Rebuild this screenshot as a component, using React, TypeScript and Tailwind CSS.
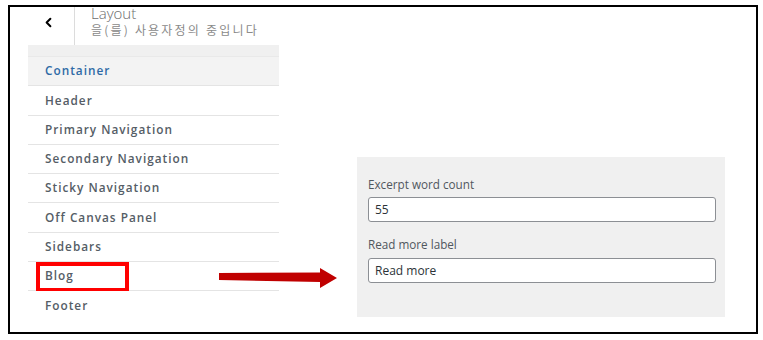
import { ChevronLeft } from 'lucide-react';

const sections = [
  'Container',
  'Header',
  'Primary Navigation',
  'Secondary Navigation',
  'Sticky Navigation',
  'Off Canvas Panel',
  'Sidebars',
  'Blog',
  'Footer',
];

const SidebarRow = ({ label }: { label: string }) => {
  const active = label === 'Container';
  const marked = label === 'Blog';
  const last = label === 'Footer';
  return (
    <div
      className={
        'relative flex h-[29.3px] items-center pl-[17px] text-[11.8px] font-semibold tracking-[1px] ' +
        (last ? '' : 'border-b border-[#e4e4e4] ') +
        (active ? 'bg-[#f3f3f3] text-[#2e6aa6]' : 'bg-white text-[#555d66]')
      }
    >
      {label}
      {marked && (
        <div className="absolute left-[8px] top-[0px] h-[30px] w-[93px] border-4 border-[#ff0000]" />
      )}
    </div>
  );
};

export default function App() {
  return (
    <div className="h-[340px] w-[763px] overflow-hidden bg-white pl-[8px] pt-[5px] font-['Open_Sans',sans-serif]">
      <div className="relative flex h-[329px] w-[750px] border-2 border-black bg-white">
        <aside className="ml-[18px] flex w-[251px] flex-col">
          <div className="flex h-[38px]">
            <div className="flex w-[47px] items-center border-r border-[#dcdcdc] pb-[8px] pl-[13px]">
              <ChevronLeft size={15} strokeWidth={3.2} className="text-black" />
            </div>
            <div className="-mt-[3px] flex flex-col pl-[16px]">
              <span className="text-[15px] font-light leading-[19px] text-[#6b6b6b]">Layout</span>
              <span className="font-['Noto_Sans_CJK_KR',sans-serif] text-[12px] leading-[14px] tracking-[2.2px] text-[#8a8a8a]">
                을(를) 사용자정의 중입니다
              </span>
            </div>
          </div>
          <div className="h-[12px] border-b border-[#e9e9e9] bg-[#f0f0f0]" />
          {sections.map((s) => (
            <SidebarRow key={s} label={s} />
          ))}
        </aside>

        <svg
          className="absolute left-[209px] top-[261px]"
          width="120"
          height="22"
          viewBox="0 0 120 22"
        >
          <polygon points="0,5 101,4.5 101,0 118,10 101,20 101,14 0,12" fill="#c00000" />
        </svg>

        <section className="ml-[78px] mt-[150px] flex h-[160px] w-[368px] flex-col bg-[#f0f0f0] pl-[11px] pr-[9px] pt-[19px]">
          <label className="text-[11.7px] leading-[16px] text-[#50575e]">Excerpt word count</label>
          <div className="mt-[5px] flex h-[25px] items-center rounded-[3px] border border-[#8c8f94] bg-white px-[6px] text-[12px] text-[#2c3338]">
            55
          </div>
          <label className="mt-[14px] text-[11.7px] leading-[16px] text-[#50575e]">Read more label</label>
          <div className="mt-[6px] flex h-[25px] items-center rounded-[3px] border border-[#8c8f94] bg-white px-[6px] text-[12px] text-[#2c3338]">
            Read more
          </div>
        </section>
      </div>
    </div>
  );
}
